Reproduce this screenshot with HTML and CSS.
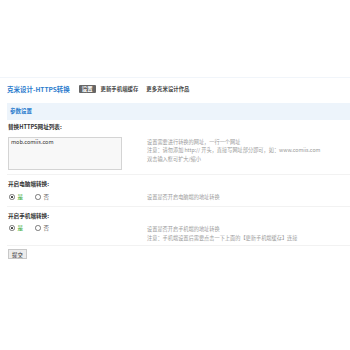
FILE: index.html
```html
<!DOCTYPE html>
<html lang="zh-CN">
<head>
<meta charset="utf-8">
<title>克米设计-HTTPS转换</title>
<link rel="stylesheet" href="styles.css">
</head>
<body>
<div class="topline"></div>
<div class="page">
  <div class="header">
    <span class="title">克米设计-HTTPS转换</span>
    <span class="tab active">设置</span>
    <span class="tab">更新手机端缓存</span>
    <span class="tab">更多克米设计作品</span>
  </div>
  <div class="bar">参数设置</div>

  <div class="label">替换HTTPS网址列表:</div>
  <div class="row row-1">
    <div class="field"><div class="textarea">mob.comiis.com</div></div>
    <div class="tips">
      <div>设置需要进行转换的网址，一行一个网址</div>
      <div>注意：请勿添加 http:// 开头，直接写网址部分即可，如：www.comiis.com</div>
      <div>双击输入框可扩大/缩小</div>
    </div>
  </div>

  <div class="label">开启电脑端转换:</div>
  <div class="row row-2">
    <div class="field radios">
      <span class="radio checked"></span><span class="yes">是</span>
      <span class="radio"></span><span class="no">否</span>
    </div>
    <div class="tips tips-mid">
      <div>设置是否开启电脑端的地址转换</div>
    </div>
  </div>

  <div class="label">开启手机端转换:</div>
  <div class="row row-3">
    <div class="field radios">
      <span class="radio checked"></span><span class="yes">是</span>
      <span class="radio"></span><span class="no">否</span>
    </div>
    <div class="tips tips-low">
      <div>设置是否开启手机端的地址转换</div>
      <div>注意：手机端设置后需要点击一下上面的【更新手机端缓存】连接</div>
    </div>
  </div>

  <div class="submit-wrap"><span class="btn">提交</span></div>
</div>
</body>
</html>
```
FILE: styles.css
```css
html, body {
  margin: 0;
  padding: 0;
  background: #fff;
}
body {
  font-family: "Noto Sans CJK SC", "DejaVu Sans", sans-serif;
  font-size: 5.5px;
  color: #333;
}
.topline {
  height: 77px;
  border-bottom: 1px solid #f1f5fa;
}
.page {
  padding-left: 7px;
}
.header {
  display: flex;
  align-items: center;
  height: 22px;
}
.title {
  font-size: 6.5px;
  font-weight: bold;
  color: #2b7ccd;
  margin-right: 9px;
}
.tab {
  font-size: 5.4px;
  font-weight: bold;
  color: #444;
  margin-right: 8px;
}
.tab.active {
  background: #666;
  color: #fff;
  padding: 0 3px;
  height: 8px;
  line-height: 8px;
  margin-right: 5px;
  border-radius: 1px;
}
.bar {
  margin-top: 3px;
  height: 17px;
  line-height: 17px;
  background: #edf4fb;
  color: #2b7ccd;
  font-weight: bold;
  padding-left: 3px;
}
.label {
  font-weight: bold;
  font-size: 5.6px;
  height: 8px;
  line-height: 8px;
  padding-left: 1px;
  margin-top: 3px;
}
.row-1 + .label,
.row-2 + .label {
  margin-top: 5px;
}
.row {
  display: grid;
  grid-template-columns: 140px 1fr;
  border-bottom: 1px solid #f2f2f2;
}
.row-1 {
  margin-top: 6px;
  padding-bottom: 4px;
}
.row-2 {
  margin-top: 4px;
  padding-bottom: 5px;
}
.row-3 {
  margin-top: 3px;
  padding-bottom: 3px;
}
.field {
  padding-left: 1px;
}
.textarea {
  width: 108px;
  height: 29px;
  border: 1px solid #d4d4d4;
  background: #f8f8f8;
  padding: 1px 2px;
  line-height: 7px;
  color: #333;
}
.tips {
  color: #9a9a9a;
  font-size: 5.2px;
  line-height: 8.5px;
  padding-top: 0.5px;
}
.tips-mid {
  line-height: 8px;
  padding-top: 1px;
}
.tips-low {
  line-height: 9px;
  padding-top: 1px;
}
.radios {
  display: flex;
  align-items: center;
  height: 8px;
  padding-top: 1px;
}
.radio {
  box-sizing: border-box;
  width: 5.5px;
  height: 5.5px;
  border: 0.7px solid #777;
  border-radius: 50%;
  margin-left: 1px;
  margin-right: 3px;
  position: relative;
  background: #fff;
}
.radio.checked::after {
  content: "";
  position: absolute;
  left: 1.2px;
  top: 1.2px;
  width: 1.7px;
  height: 1.7px;
  border-radius: 50%;
  background: #333;
}
.yes {
  color: #2aa52a;
  margin-right: 11px;
}
.no {
  color: #666;
}
.submit-wrap {
  margin-top: 3px;
  padding-left: 1px;
}
.btn {
  display: inline-block;
  height: 10px;
  line-height: 10px;
  padding: 0 3px;
  background: #ececec;
  border: 1px solid #c8c8c8;
  box-sizing: border-box;
  font-size: 5.4px;
  color: #333;
}
```
